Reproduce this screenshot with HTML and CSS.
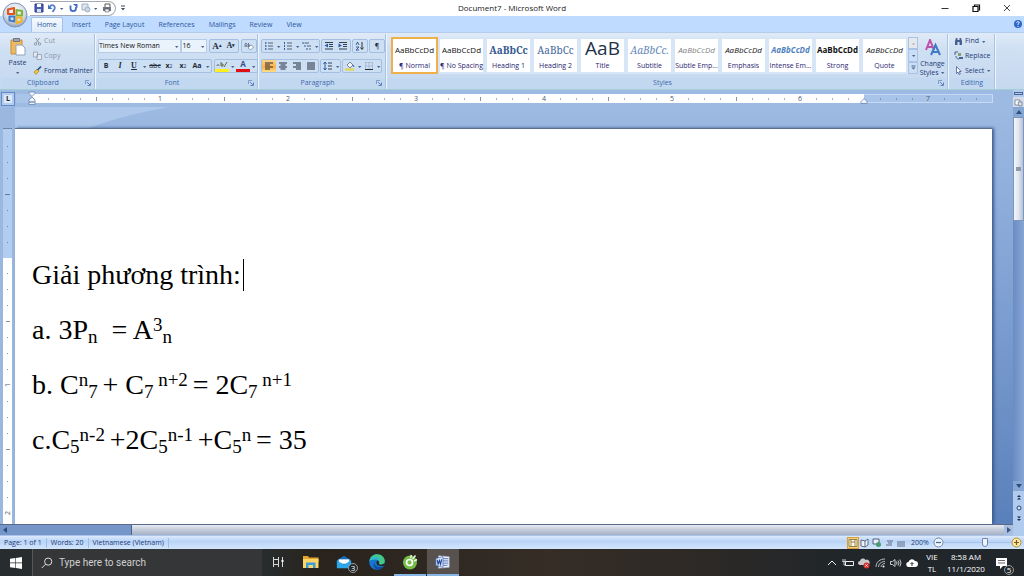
FILE: index.html
```html
<!DOCTYPE html>
<html lang="vi">
<head>
  <meta charset="UTF-8">
  <title>Document7 - Microsoft Word</title>
  <meta name="viewport" content="width=device-width, initial-scale=1.0">
  <link rel="stylesheet" href="styles.css">
</head>
<body>

  <!-- Title bar -->
  <header class="titlebar">
    <button class="orb" aria-label="Office">
      <svg viewBox="0 0 26 26" width="26" height="26">
        <defs>
          <radialGradient id="orbFill" cx="50%" cy="35%" r="65%">
            <stop offset="0" stop-color="#ffffff"/>
            <stop offset=".65" stop-color="#d3dbe8"/>
            <stop offset="1" stop-color="#8f9fb8"/>
          </radialGradient>
        </defs>
        <circle cx="13" cy="13" r="12" fill="url(#orbFill)" stroke="#8396b5"/>
        <g fill="none" stroke-width="2.2" stroke-linejoin="round">
          <path d="M6 7.500l6-1.500v6h-6z" stroke="#e2561d"/>
          <path d="M14.500 8l5.500 1v4.500h-5.500z" stroke="#7fb539"/>
          <path d="M7.500 14.500h5v5l-5-1z" stroke="#3d7fce"/>
          <path d="M14.500 15.500h5v4l-5 1.500z" stroke="#f5b325"/>
        </g>
      </svg>
    </button>
    <div class="quick">
      <button aria-label="Save"><svg viewBox="0 0 10 10"><path d="M1 1h8v8H1z" fill="#4a5fb5" stroke="#2c3a86"/><path d="M3 1h4v3H3z" fill="#fff"/><path d="M3 6h4v3H3z" fill="#d5def2"/></svg></button>
      <button aria-label="Undo"><svg viewBox="0 0 10 10"><path d="M3 4C4 1 9 2 7.500 6L5.500 9" fill="none" stroke="#5580cc" stroke-width="1.800"/><path d="M1 1.500v4.500h4.500z" fill="#4674c4"/></svg></button>
      <svg class="dd"><use href="#caret"/></svg>
      <button aria-label="Redo"><svg viewBox="0 0 10 10"><path d="M2.500 2.500v3a2.700 2.700 0 0 0 5.400 0V4" fill="none" stroke="#3f6cc0" stroke-width="1.800"/><path d="M5 1h4.500v4z" fill="#3f6cc0"/></svg></button>
      <button aria-label="Shapes"><svg viewBox="0 0 10 10"><path d="M1 1h6v6H1z" fill="#dfe6ef" stroke="#9fb0c6"/><circle cx="6.500" cy="6.500" r="2.500" fill="#cbd6e4" stroke="#9fb0c6"/></svg></button>
      <svg class="dd"><use href="#caret"/></svg>
      <button aria-label="Quick print"><svg viewBox="0 0 10 10"><path d="M3 4V1h5v3" fill="#fff" stroke="#555"/><path d="M1 4h8v4H1z" fill="#6e7683"/><path d="M3 6h4v3H3z" fill="#e9edf4" stroke="#444" stroke-width=".5"/></svg></button>
    </div>
    <button class="customize" aria-label="Customize"><svg viewBox="0 0 6 8" width="6" height="8"><path d="M1 2h4" stroke="#3b4a66"/><path d="M1 4h4L3 6.500z" fill="#3b4a66"/></svg></button>
    <h1>Document7 - Microsoft Word</h1>
    <div class="window-buttons">
      <button aria-label="Minimize"><svg viewBox="0 0 10 10"><path d="M1.500 5.500h7" stroke="#333"/></svg></button>
      <button aria-label="Restore"><svg viewBox="0 0 10 10"><path d="M2 3.500h5v5H2z" fill="none" stroke="#111" stroke-width="1.200"/><path d="M3.500 3V2H8.500v5H7.500" fill="none" stroke="#111" stroke-width="1.200"/></svg></button>
      <button aria-label="Close"><svg viewBox="0 0 10 10"><path d="M2 2l6 6M8 2L2 8" stroke="#333" stroke-width=".9"/></svg></button>
    </div>
  </header>

  <!-- Shared dropdown arrow -->
  <svg class="defs" aria-hidden="true">
    <symbol id="caret" viewBox="0 0 5 5"><path d="M1 2h3.400L2.700 4z" fill="#4b648c"/></symbol>
    <symbol id="launch" viewBox="0 0 6 6"><path d="M.5 4V.5H4" fill="none" stroke="#7b9bc9"/><path d="M2 2l3 3M5.500 2.500v3h-3" fill="none" stroke="#5f83b8"/></symbol>
  </svg>

  <nav class="tabs">
    <a href="#home" class="active">Home</a>
    <a href="#insert">Insert</a>
    <a href="#layout">Page Layout</a>
    <a href="#references">References</a>
    <a href="#mailings">Mailings</a>
    <a href="#review">Review</a>
    <a href="#view">View</a>
    <button class="help" aria-label="Help"><svg viewBox="0 0 8 8" width="8" height="8"><circle cx="4" cy="4" r="4" fill="#2f68c8"/><path d="M2.700 3c0-2 2.800-1.500 2.600 0L4 4.200V5M4 6v1" fill="none" stroke="#fff" stroke-width=".9"/></svg></button>
  </nav>

  <!-- Ribbon -->
  <section class="ribbon">
    <div class="group clipboard">
      <div class="group-body">
        <button class="paste">
          <svg viewBox="0 0 16 18" width="16" height="18"><path d="M1 2h11v14H1z" fill="#f0b95a" stroke="#c98d36"/><path d="M3.500 .5h6v3h-6z" fill="#9aa5b5" stroke="#6c7686"/><path d="M6 7h6l3 3v7H6z" fill="#fff" stroke="#8ea2c0"/></svg>
          <span>Paste</span>
          <svg class="dd"><use href="#caret"/></svg>
        </button>
        <div class="stack">
          <button class="off"><svg viewBox="0 0 9 9"><path d="M2.500 1l3.500 5M6.500 1L3 6" stroke="#8f99a8"/><circle cx="2.500" cy="7" r="1.200" fill="none" stroke="#8f99a8"/><circle cx="6.500" cy="7" r="1.200" fill="none" stroke="#8f99a8"/></svg>Cut</button>
          <button class="off"><svg viewBox="0 0 9 9"><path d="M.5 1h4v5h-4zM4 3.500h4.500v5H4z" fill="#e4eaf2" stroke="#98a4b5" stroke-width=".9"/></svg>Copy</button>
          <button><svg viewBox="0 0 9 9"><path d="M1 6l3-3 2 2-3 3.500z" fill="#efc534" stroke="#9b7a1c" stroke-width=".6"/><path d="M4.500 4L8 .5" stroke="#35578f" stroke-width="1.700"/></svg>Format Painter</button>
        </div>
      </div>
      <footer>Clipboard<svg class="launch"><use href="#launch"/></svg></footer>
    </div>

    <div class="group font">
      <div class="group-body rows">
        <div class="row">
          <div class="picker face"><select aria-label="Font"><option>Times New Roman</option></select><svg class="dd"><use href="#caret"/></svg></div>
          <div class="picker size"><select aria-label="Font size"><option>16</option></select><svg class="dd"><use href="#caret"/></svg></div>
          <div class="set grow-shrink">
            <button class="serif grow" aria-label="Grow font">A<sup>▴</sup></button>
            <button class="serif" aria-label="Shrink font">A<sup>▾</sup></button>
          </div>
          <div class="set"><button aria-label="Clear formatting"><svg viewBox="0 0 10 10"><path d="M1 6V3l1-1 1 1v3M1 5h2M4.500 2v4h1.500V4H4.500" fill="none" stroke="#55657f" stroke-width=".8"/><path d="M4 7l3-3 2.500 2-3 3z" fill="#fff" stroke="#6a7d9c" stroke-width=".7"/></svg></button></div>
        </div>
        <div class="row">
          <div class="set">
            <button><b>B</b></button>
            <button class="serif"><i>I</i></button>
            <button class="serif"><u>U</u></button>
            <svg class="dd"><use href="#caret"/></svg>
            <button><s>abc</s></button>
            <button><b>x</b><sub>2</sub></button>
            <button><b>x</b><sup>2</sup></button>
            <button><b>Aa</b></button>
            <svg class="dd"><use href="#caret"/></svg>
          </div>
          <div class="set">
            <button class="swatch mark" aria-label="Highlight"><svg viewBox="0 0 12 7"><path d="M1 5c0-2 2-2 2 0M5 1v4h2V3H5M8 6l3-5" fill="none" stroke="#5b6b50"/></svg></button>
            <svg class="dd"><use href="#caret"/></svg>
            <button class="swatch ink">A</button>
            <svg class="dd"><use href="#caret"/></svg>
          </div>
        </div>
      </div>
      <footer>Font<svg class="launch"><use href="#launch"/></svg></footer>
    </div>

    <div class="group paragraph">
      <div class="group-body rows">
        <div class="row">
          <div class="set">
            <button aria-label="Bullets"><svg viewBox="0 0 10 10"><path d="M1 2h1.500M1 5h1.500M1 8h1.500" stroke="#2c5ba8" stroke-width="1.500"/><path d="M4 2h5M4 5h5M4 8h5" stroke="#53617a"/></svg></button>
            <svg class="dd"><use href="#caret"/></svg>
            <button aria-label="Numbering"><svg viewBox="0 0 10 10"><path d="M1.500 1v2M1.500 4v2M1.500 7v2" stroke="#2c5ba8"/><path d="M4 2h5M4 5h5M4 8h5" stroke="#53617a"/></svg></button>
            <svg class="dd"><use href="#caret"/></svg>
            <button aria-label="Multilevel list"><svg viewBox="0 0 10 10"><path d="M1 1v2M3 4v2M5 7v2" stroke="#2c5ba8"/><path d="M2.500 2H7M5 5h4M7 8h2" stroke="#53617a"/></svg></button>
            <svg class="dd"><use href="#caret"/></svg>
          </div>
          <div class="set">
            <button aria-label="Decrease indent"><svg viewBox="0 0 10 10"><path d="M1 1.500h8M5 3.500h4M5 5.500h4M1 8h8" stroke="#333f55"/><path d="M4 2.500v4L.5 4.500z" fill="#2c5ba8"/></svg></button>
            <button aria-label="Increase indent"><svg viewBox="0 0 10 10"><path d="M1 1.500h8M5 3.500h4M5 5.500h4M1 8h8" stroke="#333f55"/><path d="M.5 2.500v4L4 4.500z" fill="#2c5ba8"/></svg></button>
          </div>
          <div class="set"><button aria-label="Sort"><svg viewBox="0 0 10 10"><path d="M1 4l1.500-3L4 4M1 6h3L1 9h3" fill="none" stroke="#2c4f94" stroke-width=".9"/><path d="M7 1v7M5.500 6.500L7 8.500l1.500-2" fill="none" stroke="#333"/></svg></button></div>
          <div class="set"><button>¶</button></div>
        </div>
        <div class="row">
          <div class="set">
            <button class="on" aria-label="Align left"><svg viewBox="0 0 10 10"><path d="M1 2h8M1 4h5M1 6h8M1 8h5" stroke="#222b3c"/></svg></button>
            <button aria-label="Center"><svg viewBox="0 0 10 10"><path d="M1 2h8M2.500 4h5M1 6h8M2.500 8h5" stroke="#222b3c"/></svg></button>
            <button aria-label="Align right"><svg viewBox="0 0 10 10"><path d="M1 2h8M4 4h5M1 6h8M4 8h5" stroke="#222b3c"/></svg></button>
            <button aria-label="Justify"><svg viewBox="0 0 10 10"><path d="M1 2h8M1 4h8M1 6h8M1 8h8" stroke="#222b3c"/></svg></button>
          </div>
          <div class="set">
            <button aria-label="Line spacing"><svg viewBox="0 0 10 10"><path d="M2 1v8M.5 3L2 1l1.500 2M.5 7L2 9l1.500-2" fill="none" stroke="#2c5ba8"/><path d="M5 2h4M5 5h4M5 8h4" stroke="#333f55"/></svg></button>
            <svg class="dd"><use href="#caret"/></svg>
          </div>
          <div class="set">
            <button aria-label="Shading"><svg viewBox="0 0 10 10"><path d="M2 4l3-3 3 3-3 3z" fill="#f3f6fb" stroke="#5a6a84" stroke-width=".8"/><path d="M0 8.500h9" stroke="#e6d53c" stroke-width="2"/><path d="M8 4l1 2" stroke="#2c5ba8"/></svg></button>
            <svg class="dd"><use href="#caret"/></svg>
            <button aria-label="Borders"><svg viewBox="0 0 10 10"><path d="M1 1.500h8M1.500 1v7M8.500 1v7M5 1v7M1 5h8" stroke="#9db0cd" stroke-width=".7"/><path d="M1 8.500h8" stroke="#222b3c"/></svg></button>
            <svg class="dd"><use href="#caret"/></svg>
          </div>
        </div>
      </div>
      <footer>Paragraph<svg class="launch"><use href="#launch"/></svg></footer>
    </div>

    <div class="group styles">
      <div class="group-body">
        <div class="gallery">
          <button class="tile chosen"><span class="sample">AaBbCcDd</span><span>¶ Normal</span></button>
          <button class="tile"><span class="sample">AaBbCcDd</span><span>¶ No Spacing</span></button>
          <button class="tile"><span class="sample heading1">AaBbCc</span><span>Heading 1</span></button>
          <button class="tile"><span class="sample heading2">AaBbCc</span><span>Heading 2</span></button>
          <button class="tile"><span class="sample title">AaB</span><span>Title</span></button>
          <button class="tile"><span class="sample subtitle">AaBbCc.</span><span>Subtitle</span></button>
          <button class="tile"><span class="sample subtle">AaBbCcDd</span><span>Subtle Emp...</span></button>
          <button class="tile"><span class="sample italic">AaBbCcDd</span><span>Emphasis</span></button>
          <button class="tile"><span class="sample intense">AaBbCcDd</span><span>Intense Em...</span></button>
          <button class="tile"><span class="sample strong">AaBbCcDd</span><span>Strong</span></button>
          <button class="tile"><span class="sample italic">AaBbCcDd</span><span>Quote</span></button>
          <div class="scroller">
            <button class="faded" aria-label="Up"><svg viewBox="0 0 5 5"><path d="M1 3.500h3L2.500 2z" fill="#9a9a9a"/></svg></button>
            <button aria-label="Down"><svg viewBox="0 0 5 5"><use href="#caret"/></svg></button>
            <button aria-label="More"><svg viewBox="0 0 5 5"><path d="M.5 1h4" stroke="#4b648c"/><path d="M.5 2.500h4l-2 2z" fill="#4b648c"/></svg></button>
          </div>
        </div>
        <button class="change">
          <svg class="letters" viewBox="0 0 16 17" width="16" height="17"><g fill="none" stroke-width="2"><path d="M1 11L5 1l4 10M2.500 8h5" stroke="#c04fa8"/><path d="M6 16l4.500-10L15 16M8 13h5" stroke="#3f7ac6"/></g></svg>
          <span>Change</span>
          <span>Styles <svg class="dd"><use href="#caret"/></svg></span>
        </button>
      </div>
      <footer>Styles<svg class="launch"><use href="#launch"/></svg></footer>
    </div>

    <div class="group editing">
      <div class="group-body">
        <div class="stack">
          <button><svg viewBox="0 0 9 9"><path d="M1 8V4l1-3h1.500v7zM5.500 8V1H7l1 3v4z" fill="#46618f"/><path d="M3 4h3" stroke="#46618f" stroke-width="2"/></svg>Find<svg class="dd"><use href="#caret"/></svg></button>
          <button><svg viewBox="0 0 9 9"><path d="M1 4V1h3M2 5c0 2 1 3 3 3" fill="none" stroke="#46618f"/><path d="M4 2h3v3H4z" fill="#7fa36a"/><path d="M5 6h4v2H5z" fill="#46618f"/></svg>Replace</button>
          <button><svg viewBox="0 0 9 9"><path d="M2.500 .5v7L4 6l1 2.500L6.300 8 5.200 5.500h2z" fill="#fff" stroke="#46618f" stroke-width=".8"/></svg>Select<svg class="dd"><use href="#caret"/></svg></button>
        </div>
      </div>
      <footer>Editing</footer>
    </div>
  </section>

  <!-- Rulers, page, scroll bars -->
  <main class="workspace">
    <div class="desk">
      <div class="ruler">
        <button class="tab-stop" aria-label="Tab stop">L</button>
        <div class="scale">
          <div class="margin-left"></div>
          <div class="typing">
            <svg class="indent" viewBox="0 0 8 14" width="8" height="14"><path d="M1 1h6v1.500L4 5.500 1 2.500zM1 11V9l3-3 3 3v2zM1 11h6v2.500H1z" fill="#eef3fb" stroke="#6d86ae" stroke-width=".8"/></svg>
            <span>1</span><span>2</span><span>3</span><span>4</span><span>5</span><span>6</span>
          </div>
          <div class="margin-right">
            <svg class="indent" viewBox="0 0 8 14" width="8" height="14"><path d="M1 11.500V9.500l3-3 3 3v2z" fill="#eef3fb" stroke="#6d86ae" stroke-width=".8"/></svg>
            <span>7</span>
          </div>
        </div>
      </div>
      <div class="canvas">
        <div class="side-ruler">
          <div class="side-margin"></div>
          <div class="side-typing"><span>1</span><span>2</span></div>
        </div>
        <div class="surface">
          <svg class="swoosh" viewBox="0 0 160 21" width="160" height="21"><path d="M0 0h154Q105 9 74 21H0z" fill="#adc8ea"/></svg>
          <article class="page" contenteditable="true" spellcheck="false">
            <p>Giải phương trình:<span class="cursor"></span></p>
            <p>a. 3P<sub>n</sub>&nbsp; = A<sup>3</sup><sub>n</sub></p>
            <p>b. C<sup>n</sup><sub>7 </sub>+ C<sub>7</sub><sup> n+2 </sup>= 2C<sub>7</sub><sup> n+1</sup></p>
            <p>c.C<sub>5</sub><sup>n-2 </sup>+2C<sub>5</sub><sup>n-1 </sup>+C<sub>5</sub><sup>n </sup>= 35</p>
          </article>
        </div>
      </div>
      <div class="hscroll">
        <button aria-label="Scroll left"><svg viewBox="0 0 6 8" width="6" height="8"><path d="M5 1v6L1 4z" fill="#2f4a7c"/></svg></button>
        <div class="htrack"></div>
        <div class="hthumb"></div>
        <button aria-label="Scroll right"><svg viewBox="0 0 6 8" width="6" height="8"><path d="M1 1v6l4-3z" fill="#3d5585"/></svg></button>
      </div>
    </div>

    <div class="vscroll">
      <div class="split"></div>
      <button class="ruler-toggle" aria-label="View ruler"><svg viewBox="0 0 9 9" width="9" height="9"><path d="M1 2h5v5H1z" fill="#fff" stroke="#6b7a94" stroke-width=".8"/><path d="M4 4h4v4H5z" fill="#dfe6f1" stroke="#6b7a94" stroke-width=".8"/></svg></button>
      <button class="up" aria-label="Scroll up"><svg viewBox="0 0 8 6" width="8" height="6"><path d="M1 5h6L4 1z" fill="#304c80"/></svg></button>
      <div class="vthumb"><i></i></div>
      <div class="vtrack"></div>
      <button class="down" aria-label="Scroll down"><svg viewBox="0 0 8 6" width="8" height="6"><path d="M1 1h6L4 5z" fill="#304c80"/></svg></button>
      <div class="browse">
        <button aria-label="Previous page"><svg viewBox="0 0 6 6"><path d="M1 3l2-2 2 2zM1 5.500l2-2 2 2z" fill="#1e2f55"/></svg></button>
        <button aria-label="Browse object"><svg viewBox="0 0 6 6"><circle cx="3" cy="3" r="2" fill="#dbe6f7" stroke="#2b4274"/></svg></button>
        <button aria-label="Next page"><svg viewBox="0 0 6 6"><path d="M1 .5h4l-2 2zM1 3h4L3 5z" fill="#1e2f55"/></svg></button>
      </div>
    </div>
  </main>

  <!-- Status bar -->
  <div class="status">
    <span class="pages">Page: 1 of 1</span>
    <span class="words">Words: 20</span>
    <span class="lang">Vietnamese (Vietnam)</span>
    <div class="views">
      <button class="on" aria-label="Print layout"><svg viewBox="0 0 10 10"><path d="M1 1.500h8v7H1zM3 1v8M7 1v8M3 4h4" fill="#fffbe8" stroke="#8a7440" stroke-width=".9"/></svg></button>
      <button aria-label="Full screen reading"><svg viewBox="0 0 10 10"><path d="M1 2l4 1 3-2v6L5 9 1 8zM5 3v6" fill="#f0f4fa" stroke="#4f5f7c" stroke-width=".9"/></svg></button>
      <button aria-label="Web layout"><svg viewBox="0 0 10 10"><path d="M1 1h6v5H1z" fill="#e8eef7" stroke="#4f5f7c"/><circle cx="6.500" cy="6.500" r="2.500" fill="#4b9a70"/></svg></button>
      <button aria-label="Outline"><svg viewBox="0 0 10 10"><path d="M3 3h6M4 5h4M2 7h6" stroke="#5f6d86"/></svg></button>
      <button aria-label="Draft"><svg viewBox="0 0 10 10"><path d="M1 4h8M1 6h8M1 8h8" stroke="#5f6d86"/></svg></button>
    </div>
    <button class="percent">200%</button>
    <button class="zoom-btn" aria-label="Zoom out"><svg viewBox="0 0 11 11" width="11" height="11"><circle cx="5.500" cy="5.500" r="4.500" fill="#eef4fc" stroke="#6e86ab"/><path d="M3 5.500h5" stroke="#506a94" stroke-width="1.300"/></svg></button>
    <input class="zoom" type="range" min="0" max="100" value="62" aria-label="Zoom">
    <button class="zoom-btn" aria-label="Zoom in"><svg viewBox="0 0 11 11" width="11" height="11"><circle cx="5.500" cy="5.500" r="4.500" fill="#fde9a6" stroke="#b78d33"/><path d="M3 5.500h5M5.500 3v5" stroke="#7b5d1c" stroke-width="1.200"/></svg></button>
  </div>

  <!-- Windows taskbar -->
  <footer class="taskbar">
    <button class="start" aria-label="Start"><svg viewBox="0 0 12 12" width="12" height="12"><path d="M0 1.800l5.400-.8v4.600H0zM6 .9l6-.9v5.600H6zM0 6.300h5.400V11L0 10.200zM6 6.300h6V12l-6-.9z" fill="#fff"/></svg></button>
    <label class="search">
      <svg viewBox="0 0 12 12" width="12" height="12"><circle cx="7.200" cy="4.600" r="3.600" fill="none" stroke="#ddd"/><path d="M4.600 7.200L.8 11" stroke="#ddd"/></svg>
      <input type="text" placeholder="Type here to search">
    </label>
    <div class="apps">
      <button aria-label="Task view"><svg viewBox="0 0 16 16"><path d="M3.500 3v2.500h5V3M3.500 13v-2.500h5V13M3.500 5.500v5M8.500 5.500v5M12.500 3v10" fill="none" stroke="#ddd"/><path d="M12.500 6v2" stroke="#fff" stroke-width="2"/></svg></button>
      <button aria-label="File Explorer"><svg viewBox="0 0 16 16"><path d="M0 2h5l1 1.500h9.500V8H0z" fill="#e5a52a"/><path d="M0 5h15.500v9H0z" fill="#fbd568"/><path d="M3 14V8.500h9.500V14H10v-3H5.500v3z" fill="#3d9bd9"/></svg></button>
      <button aria-label="Mail" class="mail"><svg viewBox="0 0 18 16"><path d="M1 6l8-5 8 5v8H1z" fill="#0f6dbb"/><path d="M3 5h12v5H3z" fill="#fff"/><path d="M1 6l8 5 8-5v9H1z" fill="#2ba7ea"/></svg><em>3</em></button>
      <button aria-label="Edge"><svg viewBox="0 0 16 16"><circle cx="8" cy="8" r="7.800" fill="#1576cf"/><path d="M.4 7C1 2.500 4.500 .2 8 .2c5 0 7.800 3.600 7.800 6.800 0 3.500-4 4.300-6 3.200 1.200-1.500.5-4.200-2-4.700C5 5 1.500 5.500.4 7z" fill="#45c882"/><path d="M.4 7C1.500 3.500 4.500 2.300 7.500 2.700c2.500.4 4 2.300 4 4.300-1-1.500-2.500-2.100-4-1.800C5 5.700 2 5.200.4 7z" fill="#31b7d5"/><path d="M5.500 8c-.5 3 2 5.500 6.500 5 1-.2 2-.6 3-1.300-1 2-3.500 4-6.500 4C5 15 3.500 10.500 5.500 8z" fill="#0d4f9d"/><path d="M8 6.500c2.200.2 2.500 2 1.700 3.500 1.500 1 4 1 6-1.300 0 1.300-.4 2.300-1 3-4 1-7.500-.2-7.200-3.200z" fill="#28231f"/></svg></button>
      <button aria-label="Browser" class="open"><svg viewBox="0 0 16 16"><circle cx="8" cy="8.500" r="7" fill="#73bd45"/><circle cx="7.500" cy="8.500" r="3" fill="none" stroke="#fff" stroke-width="1.700"/><path d="M8.500 4l1-3M10.500 5l3-3.500M12 7l3-1.500" stroke="#e8f3dd" stroke-width="1.600"/></svg></button>
      <button aria-label="Word" class="open current"><svg viewBox="0 0 18 16"><path d="M4 1l12 1v12L4 15z" fill="#f4f7fc" stroke="#9fb3d8" stroke-width=".6"/><path d="M9 4h6M9 6h6M9 8h6M9 10h6M9 12h5" stroke="#5a7bbd"/><path d="M1 4l8-2v12l-8-2z" fill="#d6e2f6" stroke="#3f63b0" stroke-width=".7"/><path d="M2.500 5.500l1 5 1.500-4 1.200 4L7.500 5" fill="none" stroke="#23489b" stroke-width="1.300"/></svg></button>
    </div>
    <div class="tray">
      <button aria-label="Hidden icons"><svg viewBox="0 0 12 12"><path d="M2 8l4-4 4 4" fill="none" stroke="#eee"/></svg></button>
      <button aria-label="Battery"><svg viewBox="0 0 12 12"><path d="M3.500 4.500h8v4h-8z" fill="none" stroke="#eee"/><path d="M1 2v3M3 2v3M.5 4.500h3M2 5v3h2" fill="none" stroke="#eee" stroke-width=".8"/></svg></button>
      <button aria-label="OneDrive"><svg viewBox="0 0 12 12"><path d="M2 8a2 2 0 0 1 0-4 3 3 0 0 1 5.500-1A2.500 2.500 0 0 1 10 8z" fill="#c9c9c9"/><circle cx="8.500" cy="8.500" r="3" fill="#d9302b"/><path d="M7.300 7.300l2.400 2.400M9.700 7.300L7.300 9.700" stroke="#fff" stroke-width=".8"/></svg></button>
      <button aria-label="Network"><svg viewBox="0 0 12 12"><g fill="none" stroke="#ccc" stroke-width=".9"><path d="M2 10C2 5 6 2 11 2M4.500 10C4.500 7 7 4.500 11 4.500M7 10c0-2 2-3.500 4-3.500"/></g><circle cx="9.500" cy="9.500" r="1" fill="#fff"/></svg></button>
      <button aria-label="Volume"><svg viewBox="0 0 12 12"><path d="M.5 4.500h2l2.500-2v7l-2.500-2h-2zM6.500 4.500q1 1.500 0 3M8 3.500q2 2.500 0 5M9.800 2.500q2.500 3.500 0 7" fill="none" stroke="#ddd" stroke-width=".9"/></svg></button>
      <button aria-label="Cloud"><svg viewBox="0 0 12 12"><path d="M3 10a2.500 2.500 0 0 1-.5-5A3.500 3.500 0 0 1 9 4a3 3 0 0 1 0 6z" fill="#fff"/><path d="M6 9V6M4.500 7L6 5.500 7.500 7" fill="none" stroke="#222"/></svg></button>
      <button class="keyboard"><span>VIE</span><span>TL</span></button>
      <button class="clock"><span>8:58 AM</span><span>11/1/2020</span></button>
      <button class="notes" aria-label="Notifications"><svg viewBox="0 0 12 12" width="12" height="12"><path d="M0 1h11v8H7l-3 3V9H0z" fill="#fff"/><path d="M2 3.500h7M2 6h7" stroke="#444" stroke-width=".8"/></svg><em>5</em></button>
    </div>
  </footer>

</body>
</html>
```
FILE: styles.css
```css
* {
  box-sizing: border-box;
}

body {
  margin: 0;
  height: 100vh;
  display: flex;
  flex-direction: column;
  overflow: hidden;
  font-family: "Open Sans", "Noto Sans", sans-serif;
  font-size: 7px;
  line-height: 10px;
  color: #1e3b78;
  background: #9dbae3;
}

button,
select,
input {
  margin: 0;
  padding: 0;
  border: 0;
  background: none;
  font: inherit;
  color: inherit;
}

button {
  display: flex;
  align-items: center;
  justify-content: center;
}

svg {
  flex: none;
}

em {
  font-style: normal;
}

.defs {
  position: absolute;
  width: 0;
  height: 0;
}

.dd {
  width: 5px;
  height: 5px;
}

/* Title bar */
.titlebar {
  position: relative;
  display: flex;
  align-items: center;
  height: 16px;
  background: #fff;
}

.orb {
  position: absolute;
  z-index: 2;
  left: 2px;
  top: 2px;
}

.quick {
  display: flex;
  align-items: center;
  gap: 3px;
  width: 86px;
  height: 15px;
  margin-left: 30px;
  padding-left: 4px;
  border: 1px solid #a3a9b3;
  border-left: 0;
  border-radius: 0 8px 8px 0;
}

.quick button svg {
  width: 10px;
  height: 10px;
}

.quick .dd {
  margin: 0 1px 0 -1px;
}

.customize {
  margin-left: 4px;
}

.titlebar h1 {
  position: absolute;
  left: 0;
  right: 0;
  margin: 0;
  font-size: 8px;
  font-weight: normal;
  text-align: center;
  color: #222;
  pointer-events: none;
}

.window-buttons {
  display: flex;
  gap: 21px;
  margin-left: auto;
  padding-right: 12px;
}

.window-buttons svg {
  width: 10px;
  height: 10px;
}

/* Tabs */
.tabs {
  display: flex;
  align-items: flex-end;
  height: 16px;
  padding-left: 31px;
  background: #bfdbff;
}

.tabs a {
  height: 15px;
  margin-right: 4px;
  padding: 0 5px;
  line-height: 16px;
  color: #2d57a0;
  text-decoration: none;
}

.tabs .active {
  background: linear-gradient(#f4f9ff, #dfebf9);
  border: 1px solid #a5c0e6;
  border-bottom: 0;
  border-radius: 2px 2px 0 0;
  line-height: 14px;
}

.help {
  align-self: center;
  margin-left: auto;
  padding-right: 2px;
}

/* Ribbon */
.ribbon {
  display: flex;
  gap: 2px;
  height: 58px;
  padding: 1px 2px 0;
  background: linear-gradient(#dfeaf7, #cfe0f3 30%, #c8daf0 80%, #c3d9ee);
  border-top: 1px solid #b4cdec;
  border-bottom: 1px solid #a6cfd5;
}

.group {
  display: flex;
  flex-direction: column;
  border-right: 1px solid #a9c3e4;
  box-shadow: 1px 0 #eef5fd;
}

.group-body {
  display: flex;
  flex: 1;
}

.group footer {
  display: flex;
  justify-content: center;
  position: relative;
  height: 11px;
  background: #c1d8f0;
  color: #4169ab;
}

.launch {
  position: absolute;
  right: 3px;
  top: 2px;
  width: 6px;
  height: 6px;
}

.clipboard {
  width: 93px;
}

.font {
  width: 161px;
}

.paragraph {
  width: 126px;
}

.styles {
  width: 560px;
}

.editing {
  width: 45px;
}

.clipboard footer,
.font footer,
.paragraph footer,
.styles footer {
  padding-right: 10px;
}

.paste {
  flex-direction: column;
  width: 31px;
  gap: 2px;
}

.stack {
  display: flex;
  flex-direction: column;
  justify-content: space-around;
  align-items: flex-start;
}

.stack button {
  gap: 2px;
  height: 13px;
  white-space: nowrap;
}

.stack button svg:first-child {
  width: 9px;
  height: 9px;
}

.off {
  color: #8d98a9;
}

.rows {
  flex-direction: column;
  gap: 6px;
  padding: 5px 0 0 1px;
}

.row {
  display: flex;
  gap: 2px;
  height: 14px;
}

.picker {
  display: flex;
  align-items: center;
  background: #eaf2fb;
  border: 1px solid #b7cbe7;
  color: #111;
}

.picker select {
  flex: 1;
  min-width: 0;
  appearance: none;
}

.face {
  width: 85px;
}

.size {
  width: 26px;
  margin-left: -2px;
}

.set {
  display: flex;
  align-items: center;
  border: 1px solid #a4bde0;
  border-radius: 2px;
  background: #cddff3;
  color: #222b3c;
}

.set button {
  min-width: 14px;
  height: 12px;
}

.set button svg {
  width: 10px;
  height: 10px;
}

.set sub,
.set sup {
  font-size: 5px;
  line-height: 0;
}

.serif {
  font-family: "Liberation Serif", serif;
  font-weight: bold;
  font-size: 8px;
}

.grow {
  font-size: 9px;
}

.font .dd {
  margin: 0 1px;
}

.paragraph .row {
  gap: 1px;
}

.set .swatch {
  padding-bottom: 1px;
  border-bottom: 3px solid #ffef1c;
  font-weight: bold;
}

.set .swatch svg {
  width: 12px;
  height: 7px;
}

.set .ink {
  border-bottom-color: #e00f14;
  color: #34518b;
  font-size: 8px;
}

.set .on {
  background: linear-gradient(#fbd48a, #fcb045 60%, #fde08a);
}

/* Style gallery */
.gallery {
  display: flex;
  flex: 1;
  gap: 4px;
  margin: 3px 0 4px 3px;
  background: #d7e6f7;
}

.tile {
  flex-direction: column;
  justify-content: flex-end;
  width: 43px;
  margin: 2px 0;
  background: #fff;
  color: #2a2470;
  white-space: nowrap;
}

.tile span:last-child {
  margin-bottom: 1px;
}

.chosen {
  width: 47px;
  margin: 0 -2px 0 0;
  border: 2px solid #efb04c;
}

.sample {
  flex: 1;
  align-self: stretch;
  font-size: 8px;
  line-height: 22px;
  text-align: center;
  color: #111;
}

.heading1,
.heading2,
.subtitle {
  font-family: "Noto Serif", "DejaVu Serif", "Liberation Serif", serif;
  font-size: 10px;
  color: #44679c;
}

.heading1 {
  font-weight: bold;
  color: #35598f;
}

.title {
  font-size: 19px;
  line-height: 18px;
  color: #22324a;
}

.subtitle {
  font-style: italic;
  color: #6487b8;
}

.subtle,
.italic {
  font-style: italic;
}

.subtle {
  color: #808080;
}

.intense {
  font-style: italic;
  font-weight: bold;
  color: #4f81bd;
}

.strong {
  font-weight: bold;
}

.scroller {
  display: flex;
  flex-direction: column;
  width: 10px;
  margin-left: -2px;
}

.scroller button {
  flex: 1;
  border: 1px solid #aac3e5;
  background: #cbdef5;
}

.scroller .faded {
  background: #e6e8ec;
}

.scroller svg {
  width: 5px;
  height: 5px;
}

.change {
  flex-direction: column;
  width: 30px;
  padding-top: 3px;
  line-height: 9px;
}

.letters {
  margin-bottom: 3px;
}

.editing .stack {
  padding-left: 4px;
}

/* Workspace */
.workspace {
  display: flex;
  flex: 1;
  min-height: 0;
}

.desk {
  display: flex;
  flex: 1;
  flex-direction: column;
  min-width: 0;
}

.ruler {
  display: flex;
  align-items: center;
  height: 17px;
  padding-right: 20px;
}

.tab-stop {
  width: 14px;
  height: 14px;
  margin-left: 1px;
  border: 1px solid #6488c4;
  background: #dce9fa;
  box-shadow: inset 0 0 0 2px #b3cdf0;
  font-weight: bold;
  color: #222;
}

.scale {
  display: flex;
  flex: 1;
  height: 9px;
  margin-left: 1px;
  line-height: 9px;
  color: #4d5a70;
}

.margin-left {
  width: 16px;
  background: #a9c4e9;
}

.typing,
.margin-right {
  position: relative;
  display: flex;
}

.typing {
  width: 832px;
  padding-left: 124px;
  background:
    repeating-linear-gradient(90deg, transparent 0 63px, #8b93a0 63px 64px, transparent 64px 128px) 1px 3px / 100% 4px no-repeat,
    repeating-linear-gradient(90deg, transparent 0 15px, #a9afb9 15px 16px) 1px 4px / 100% 2px no-repeat,
    #fff;
}

.typing span {
  width: 8px;
  margin-right: 120px;
  background: #fff;
  text-align: center;
}

.typing span:last-child {
  margin-right: 0;
}

.margin-right {
  flex: 1;
  padding-left: 60px;
  background:
    repeating-linear-gradient(90deg, transparent 0 15px, #7d97bf 15px 16px) 1px 3px / 100% 2px no-repeat,
    #a9c4e9;
  border: 1px solid #c5d9f4;
  border-left: 0;
  line-height: 7px;
}

.margin-right span {
  width: 8px;
  background: #a9c4e9;
  text-align: center;
}

.indent {
  position: absolute;
  left: -4px;
  top: -3px;
}

.canvas {
  display: flex;
  flex: 1;
  min-height: 0;
}

.side-ruler {
  display: flex;
  flex-direction: column;
  width: 15px;
  padding: 21px 3px 0;
  background: #9ab7e0;
}

.side-margin {
  height: 130px;
  background:
    repeating-linear-gradient(transparent 0 63px, #5f7aa6 63px 64px) 2px 2px / 5px 100% no-repeat,
    repeating-linear-gradient(transparent 0 15px, #6b86b2 15px 16px) 4px 2px / 1px 100% no-repeat,
    #b3cdf0;
  border-top: 1px solid #6d86ae;
}

.side-typing {
  flex: 1;
  padding-top: 123px;
  background:
    repeating-linear-gradient(transparent 0 63px, #8b93a0 63px 64px) 3px 0 / 4px 100% no-repeat,
    repeating-linear-gradient(transparent 0 15px, #8b93a0 15px 16px) 4px 0 / 1px 100% no-repeat,
    #fff;
  color: #4d5a70;
}

.side-typing span {
  display: block;
  width: 9px;
  height: 8px;
  margin-bottom: 120px;
  background: #fff;
  line-height: 9px;
  text-align: center;
  writing-mode: vertical-rl;
  transform: rotate(180deg);
}

.side-typing span:last-child {
  margin-bottom: 0;
}

.surface {
  display: flex;
  flex: 1;
  flex-direction: column;
  padding-right: 21px;
  background: linear-gradient(#9dbae3, #86a6d6 35%, #5a80bb);
}

.page {
  flex: 1;
  padding: 118px 17px 0;
  background: #fff;
  border-top: 1px solid #5d6f8f;
  box-shadow: 2px 0 3px #3c5a8e;
  font-family: "Liberation Serif", serif;
  font-size: 28px;
  line-height: 55px;
  color: #000;
  outline: 0;
}

.page p {
  margin: 0;
}

.page sub,
.page sup {
  font-size: 19px;
  line-height: 0;
  white-space: pre;
}

.page sup {
  vertical-align: 8px;
}

.page sub {
  vertical-align: -4px;
}

.cursor {
  display: inline-block;
  width: 1px;
  height: 32px;
  margin-left: 2px;
  background: #000;
  vertical-align: -7px;
}

.hscroll {
  display: flex;
  height: 12px;
  border-top: 1px solid #5b6a86;
  border-bottom: 1px solid #a9c3ea;
}

.hscroll button {
  width: 9px;
  background: #7596c8;
}

.hscroll button:last-child {
  background: #a9bfe0;
}

.htrack {
  width: 12%;
  background: #7596c8;
}

.hthumb {
  flex: 1;
  background: linear-gradient(#e6eaf2, #c2cbd9 50%, #a5b1c5);
  border-left: 1px solid #4c618b;
}

.vscroll {
  display: flex;
  flex-direction: column;
  width: 11px;
  background: #b1cbee;
}

.split {
  height: 3px;
  margin: 2px 1px;
  border: 1px solid #4d6492;
}

.ruler-toggle {
  height: 10px;
  background: #d6dde8;
}

.up,
.down {
  height: 10px;
  background: #86a6d4;
}

.vthumb {
  display: flex;
  align-items: center;
  justify-content: center;
  height: 104px;
  background: linear-gradient(90deg, #f3f6fb, #dfe5ef 50%, #b5c2d8);
  border: 1px solid #7f96bb;
}

.vthumb i {
  width: 5px;
  height: 4px;
  background: #8c98ab;
}

.vtrack {
  flex: 1;
  background: linear-gradient(90deg, #6a8cc2, #86a5d6);
}

.browse {
  display: flex;
  flex-direction: column;
  justify-content: space-between;
  height: 45px;
  padding: 3px 0 14px;
}

.browse svg {
  width: 6px;
  height: 6px;
}

/* Status bar */
.status {
  display: flex;
  align-items: center;
  height: 13px;
  padding: 0 2px 0 4px;
  background: linear-gradient(#dceafc, #b9d4f7 40%, #d3e5fc);
  white-space: nowrap;
}

.status span {
  margin-right: 4px;
  padding-right: 4px;
  border-right: 1px solid #9dbce6;
}

.views {
  display: flex;
  margin-left: auto;
}

.views button {
  width: 12px;
  height: 12px;
}

.views svg {
  width: 10px;
  height: 10px;
}

.views .on {
  background: #fcd37c;
  border: 1px solid #d79f3d;
}

.percent {
  width: 26px;
}

.zoom {
  width: 67px;
  height: 11px;
  appearance: none;
  background: linear-gradient(#a9c3e8, #a9c3e8) 0 5px / 100% 1px no-repeat;
}

.zoom::-webkit-slider-thumb {
  appearance: none;
  width: 6px;
  height: 9px;
  border: 1px solid #6e86ab;
  border-radius: 0 0 3px 3px;
  background: #eef4fc;
}

/* Taskbar */
.taskbar {
  display: flex;
  height: 27px;
  background: linear-gradient(90deg, #272d2e 260px, #29231d 320px, #352d26 550px, #2d2926 700px, #20262a 850px);
  color: #fff;
}

.start {
  width: 32px;
}

.search {
  display: flex;
  align-items: center;
  width: 230px;
  gap: 6px;
  padding-left: 8px;
  background: #343638;
  border-left: 1px solid #55585a;
}

.search input {
  flex: 1;
  min-width: 0;
  font-family: Roboto, "Open Sans", sans-serif;
  font-size: 10px;
}

.search input::placeholder {
  color: #d0d0d0;
}

.apps {
  display: flex;
  gap: 1px;
}

.apps button {
  width: 32px;
  border-bottom: 2px solid transparent;
}

.apps svg {
  width: 16px;
  height: 16px;
}

.apps .open {
  border-bottom-color: #86b5e6;
}

.apps .current {
  background: #58524e;
}

.mail,
.notes {
  position: relative;
}

.mail em,
.notes em {
  position: absolute;
  right: 2px;
  bottom: 1px;
  width: 10px;
  height: 10px;
  border: 1px solid #9a9a9a;
  border-radius: 50%;
  background: #23282b;
  font-size: 8px;
  line-height: 8px;
  text-align: center;
}

.tray {
  display: flex;
  margin-left: auto;
  padding-right: 8px;
}

.tray svg {
  width: 12px;
  height: 12px;
}

.tray button {
  width: 16px;
}

.tray .keyboard,
.tray .clock {
  flex-direction: column;
  width: 24px;
  font-size: 8px;
  line-height: 12px;
}

.tray .clock {
  width: 44px;
}

.tray .notes {
  width: 28px;
}
```
